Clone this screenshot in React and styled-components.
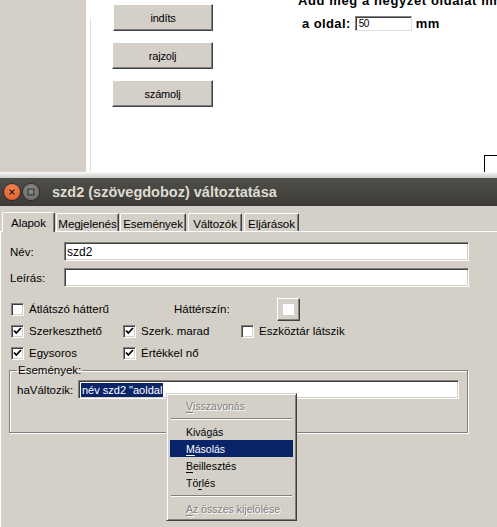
import styled, { createGlobalStyle } from 'styled-components';

const GlobalStyle = createGlobalStyle`
  html, body {
    margin: 0;
    padding: 0;
    background: #ffffff;
    overflow: hidden;
  }
  body {
    font-family: "Liberation Sans", Arial, sans-serif;
  }
`;

const Screen = styled.div`
  width: 497px;
  height: 527px;
  display: flex;
  flex-direction: column;
  position: relative;
  overflow: hidden;
`;

/* ---------- form designer behind the dialog ---------- */

const Designer = styled.div`
  height: 172px;
  flex-shrink: 0;
  display: flex;
  background: #ffffff;
  overflow: hidden;
`;

const Palette = styled.div`
  width: 86px;
  flex-shrink: 0;
  background: #d4d0c8;
`;

const Canvas = styled.div`
  flex: 1;
  min-width: 0;
  display: flex;
  position: relative;
  padding-left: 4px;
`;

const Guide = styled.div`
  width: 1px;
  flex-shrink: 0;
  margin-top: 18px;
  background: #e2e2e2;
`;

const ButtonColumn = styled.div`
  display: flex;
  flex-direction: column;
  flex-shrink: 0;
  gap: 11px;
  padding-top: 4px;
  margin-left: 21px;
  width: 101px;
`;

const FormButton = styled.div`
  height: 27px;
  box-sizing: border-box;
  margin-left: ${p => p.$shift || 0}px;
  background: #d4d0c8;
  border-top: 1px solid #ffffff;
  border-left: 1px solid #ffffff;
  border-right: 1px solid #404040;
  border-bottom: 1px solid #404040;
  box-shadow: inset -1px -1px 0 #808080;
  display: flex;
  align-items: center;
  justify-content: center;
  font-size: 11px;
  color: #000;
  letter-spacing: -0.2px;
`;

const Prompt = styled.div`
  margin-left: 85px;
  display: flex;
  flex-direction: column;
  font-weight: bold;
  font-size: 13px;
  color: #000;
  white-space: nowrap;
`;

const PromptTitle = styled.div`
  margin-top: -7px;
  letter-spacing: 0.6px;
  line-height: 16px;
`;

const PromptRow = styled.div`
  display: flex;
  align-items: center;
  margin-top: 7px;
  padding-left: 4px;
  gap: 4px;
  letter-spacing: 0.4px;
`;

const SmallInput = styled.div`
  width: 57px;
  height: 15px;
  box-sizing: border-box;
  border-top: 1px solid #808080;
  border-left: 1px solid #808080;
  border-right: 1px solid #e0e0e0;
  border-bottom: 1px solid #e0e0e0;
  box-shadow: inset 1px 1px 0 #404040;
  font-weight: normal;
  font-size: 10px;
  letter-spacing: -0.5px;
  line-height: 13px;
  padding-left: 3px;
`;

const CornerMark = styled.div`
  position: absolute;
  left: 398px;
  top: 155px;
  width: 20px;
  height: 30px;
  border-top: 1px solid #000;
  border-left: 1px solid #000;
`;

const Shade = styled.div`
  height: 6px;
  flex-shrink: 0;
  background: linear-gradient(#fafafa, #c9c9c7);
`;

/* ---------- dialog window ---------- */

const Window = styled.div`
  flex: 1;
  display: flex;
  flex-direction: column;
  background: #d4d0c8;
  position: relative;
`;

const TitleBar = styled.div`
  height: 28px;
  flex-shrink: 0;
  display: flex;
  align-items: center;
  padding-left: 4px;
  gap: 3px;
  background: linear-gradient(#4f4e49, #3c3b37);
`;

const WinButton = styled.div`
  width: 16px;
  height: 16px;
  border-radius: 50%;
  display: flex;
  align-items: center;
  justify-content: center;
  background: ${p => (p.$close
    ? 'radial-gradient(circle at 50% 35%, #f4885a, #e0531f)'
    : 'radial-gradient(circle at 50% 35%, #8e8c85, #6a6862)')};
  box-shadow: 0 0 0 1px rgba(0,0,0,0.35);
`;

const Title = styled.div`
  margin-left: 10px;
  font-weight: bold;
  font-size: 14.5px;
  color: #dfdbd2;
  white-space: nowrap;
`;

const Body = styled.div`
  flex: 1;
  display: flex;
  flex-direction: column;
  padding-top: 6px;
`;

const TabStrip = styled.div`
  display: flex;
  align-items: flex-end;
  height: 19px;
  padding-left: 2px;
  position: relative;
  z-index: 1;
`;

const Tab = styled.div`
  width: ${p => p.$w}px;
  flex-shrink: 0;
  height: ${p => (p.$active ? 20 : 18)}px;
  box-sizing: border-box;
  margin-right: ${p => p.$gap || 1}px;
  margin-bottom: ${p => (p.$active ? -1 : 0)}px;
  background: #d4d0c8;
  border-top: 1px solid #ffffff;
  border-left: 1px solid #ffffff;
  border-right: 1px solid #404040;
  box-shadow: inset -1px 0 0 #808080;
  border-radius: 2px 2px 0 0;
  display: flex;
  align-items: center;
  justify-content: center;
  font-size: 11.6px;
  letter-spacing: -0.1px;
  color: #000;
  white-space: nowrap;
  padding-top: ${p => (p.$active ? 0 : 1)}px;
`;

const Panel = styled.div`
  flex: 1;
  border-top: 1px solid #ffffff;
  border-left: 1px solid #ffffff;
  display: flex;
  flex-direction: column;
  padding: 10px 0 0 8px;
  font-size: 11.5px;
  color: #000;
`;

const FieldRow = styled.div`
  display: flex;
  align-items: center;
  height: 19px;
  margin-bottom: 7px;
`;

const Label = styled.div`
  width: ${p => p.$w}px;
  flex-shrink: 0;
  padding-left: 1px;
  white-space: nowrap;
`;

const TextInput = styled.div`
  width: ${p => p.$w}px;
  flex-shrink: 0;
  height: 19px;
  box-sizing: border-box;
  background: #ffffff;
  border-top: 1px solid #808080;
  border-left: 1px solid #808080;
  border-right: 1px solid #ffffff;
  border-bottom: 1px solid #ffffff;
  box-shadow: inset 1px 1px 0 #404040, inset -1px -1px 0 #d4d0c8;
  display: flex;
  align-items: center;
  padding-left: 2px;
  font-size: ${p => p.$size || 12}px;
  white-space: nowrap;
`;

const Selected = styled.span`
  background: #0a246a;
  color: #ffffff;
  padding: 0 1px;
  line-height: 14px;
`;

const CheckArea = styled.div`
  display: flex;
  flex-direction: column;
  margin-top: 4px;
  padding-left: 2px;
`;

const CheckRow = styled.div`
  display: flex;
  align-items: center;
  height: ${p => p.$h || 22}px;
`;

const Cell = styled.div`
  width: ${p => p.$w}px;
  flex-shrink: 0;
  display: flex;
  align-items: center;
  gap: 5px;
  white-space: nowrap;
`;

const Box = styled.div`
  width: 13px;
  height: 13px;
  box-sizing: border-box;
  background: #ffffff;
  border-top: 1px solid #808080;
  border-left: 1px solid #808080;
  border-right: 1px solid #ffffff;
  border-bottom: 1px solid #ffffff;
  box-shadow: inset 1px 1px 0 #404040, inset -1px -1px 0 #d4d0c8;
  display: flex;
  align-items: center;
  justify-content: center;
`;

const ColorButton = styled.div`
  width: 23px;
  height: 23px;
  box-sizing: border-box;
  background: #d4d0c8;
  border-top: 1px solid #ffffff;
  border-left: 1px solid #ffffff;
  border-right: 1px solid #404040;
  border-bottom: 1px solid #404040;
  box-shadow: inset -1px -1px 0 #808080;
  display: flex;
  align-items: center;
  justify-content: center;
  &::after {
    content: '';
    width: 11px;
    height: 11px;
    background: #ffffff;
  }
`;

const Group = styled.fieldset`
  margin: 0;
  width: 459px;
  height: 69px;
  box-sizing: border-box;
  border: 1px solid #808080;
  box-shadow: 1px 1px 0 #ffffff, inset 1px 1px 0 #ffffff;
  padding: 4px 0 0 6px;
  display: flex;
  flex-direction: column;
`;

const Legend = styled.legend`
  font-size: 11.5px;
  padding: 0 1px;
  margin-left: 1px;
`;

/* ---------- context menu ---------- */

const Menu = styled.div`
  position: absolute;
  left: 166px;
  top: 215px;
  width: 131px;
  box-sizing: border-box;
  background: #d4d0c8;
  border-top: 1px solid #d4d0c8;
  border-left: 1px solid #d4d0c8;
  border-right: 1px solid #404040;
  border-bottom: 1px solid #404040;
  box-shadow: inset 1px 1px 0 #ffffff, inset -1px -1px 0 #808080;
  padding: 3px;
  display: flex;
  flex-direction: column;
  font-size: 10.5px;
`;

const MenuItem = styled.div`
  height: 17px;
  display: flex;
  align-items: center;
  padding-left: 16px;
  background: ${p => (p.$hot ? '#0a246a' : 'transparent')};
  color: ${p => (p.$off ? '#808080' : p.$hot ? '#ffffff' : '#000000')};
  text-shadow: ${p => (p.$off ? '1px 1px 0 #ffffff' : 'none')};
  white-space: nowrap;
  u { text-decoration: underline; text-underline-offset: 2px; }
`;

const MenuSep = styled.div`
  height: 9px;
  display: flex;
  align-items: center;
  padding: 0 1px;
  &::after {
    content: '';
    flex: 1;
    height: 1px;
    background: #808080;
    border-bottom: 1px solid #ffffff;
  }
`;

const Tick = () => (
  <svg width="9" height="9" viewBox="0 0 9 9">
    <path d="M1 3.5 L3.3 6 L8 1" fill="none" stroke="#000" strokeWidth="1.8" />
  </svg>
);

const Check = ({ on, label, w }) => (
  <Cell $w={w}>
    <Box>{on && <Tick />}</Box>
    <span>{label}</span>
  </Cell>
);

const tabs = [
  { label: 'Alapok', w: 53, active: true },
  { label: 'Megjelenés', w: 63 },
  { label: 'Események', w: 66, gap: 2 },
  { label: 'Változók', w: 54, gap: 2 },
  { label: 'Eljárások', w: 55 },
];

export default function App() {
  return (
    <Screen>
      <GlobalStyle />
      <Designer>
        <Palette />
        <Canvas>
          <Guide />
          <ButtonColumn>
            <FormButton $shift={1}>indíts</FormButton>
            <FormButton>rajzolj</FormButton>
            <FormButton>számolj</FormButton>
          </ButtonColumn>
          <Prompt>
            <PromptTitle>Add meg a negyzet oldalat mm-ben</PromptTitle>
            <PromptRow>
              <span>a oldal:</span>
              <SmallInput>50</SmallInput>
              <span>mm</span>
            </PromptRow>
          </Prompt>
          <CornerMark />
        </Canvas>
      </Designer>
      <Shade />
      <Window>
        <TitleBar>
          <WinButton $close>
            <svg width="8" height="8" viewBox="0 0 8 8">
              <path d="M1.5 1.5 L6.5 6.5 M6.5 1.5 L1.5 6.5" stroke="#3a1a0c" strokeWidth="1.2" />
            </svg>
          </WinButton>
          <WinButton>
            <svg width="8" height="8" viewBox="0 0 8 8">
              <rect x="1" y="1" width="6" height="6" fill="none" stroke="#3c3b37" strokeWidth="1.2" />
            </svg>
          </WinButton>
          <Title>szd2 (szövegdoboz) változtatása</Title>
        </TitleBar>
        <Body>
          <TabStrip>
            {tabs.map(t => (
              <Tab key={t.label} $w={t.w} $active={t.active} $gap={t.gap}>{t.label}</Tab>
            ))}
          </TabStrip>
          <Panel>
            <FieldRow>
              <Label $w={54}>Név:</Label>
              <TextInput $w={405}>szd2</TextInput>
            </FieldRow>
            <FieldRow>
              <Label $w={54}>Leírás:</Label>
              <TextInput $w={405} />
            </FieldRow>
            <CheckArea>
              <CheckRow>
                <Check label="Átlátszó hátterű" w={163} />
                <Cell $w={103}>Háttérszín:</Cell>
                <ColorButton />
              </CheckRow>
              <CheckRow>
                <Check on label="Szerkeszthető" w={112} />
                <Check on label="Szerk. marad" w={118} />
                <Check label="Eszköztár látszik" w={120} />
              </CheckRow>
              <CheckRow>
                <Check on label="Egysoros" w={112} />
                <Check on label="Értékkel nő" w={118} />
              </CheckRow>
            </CheckArea>
            <Group>
              <Legend>Események:</Legend>
              <FieldRow>
                <Label $w={61}>haVáltozik:</Label>
                <TextInput $w={381} $size={11}>
                  <Selected>név szd2 "aoldal</Selected>
                </TextInput>
              </FieldRow>
            </Group>
          </Panel>
        </Body>
        <Menu>
          <MenuItem $off><u>V</u>isszavonás</MenuItem>
          <MenuSep />
          <MenuItem>Kivágás</MenuItem>
          <MenuItem $hot><u>M</u>ásolás</MenuItem>
          <MenuItem><u>B</u>eillesztés</MenuItem>
          <MenuItem>Tö<u>r</u>lés</MenuItem>
          <MenuSep />
          <MenuItem $off><u>A</u>z összes kijelölése</MenuItem>
        </Menu>
      </Window>
    </Screen>
  );
}
